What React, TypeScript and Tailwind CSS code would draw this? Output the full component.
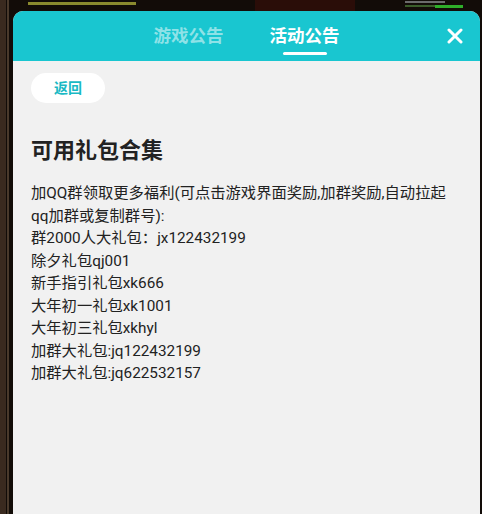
import React from "react";

const lines = [
  "加QQ群领取更多福利(可点击游戏界面奖励,加群奖励,自动拉起qq加群或复制群号):",
  "群2000人大礼包：jx122432199",
  "除夕礼包qj001",
  "新手指引礼包xk666",
  "大年初一礼包xk1001",
  "大年初三礼包xkhyl",
  "加群大礼包:jq122432199",
  "加群大礼包:jq622532157",
];

export default function App() {
  return (
    <div
      className="w-[482px] h-[514px] overflow-hidden bg-[#120c08] flex flex-col"
      style={{ fontFamily: "Roboto, 'Noto Sans CJK SC', sans-serif" }}
    >
      {/* top strip of the game scene behind */}
      <div className="h-[11px] flex shrink-0">
        <div className="w-[6px] bg-[#3a2a1f]" />
        <div className="w-[1px]" />
        <div className="w-[2px] bg-[#4a3a2c]" />
        <div className="w-[19px]" />
        <div className="pt-[2px]">
          <div className="w-[108px] h-[3px] bg-[#8a8a2e]" />
        </div>
        <div className="w-[119px]" />
        <div className="w-[100px] bg-[#2a0d08]" />
        <div className="w-[50px]" />
        <div className="flex flex-col gap-[2px] pt-[1px]">
          <div className="w-[40px] h-[2px] bg-[#6b6b6b]" />
          <div className="flex">
            <div className="w-[30px] h-[2px] bg-[#3a5d2a]" />
            <div className="w-[28px] h-[3px] bg-[#2fae2a]" />
          </div>
        </div>
      </div>

      <div className="flex flex-1">
        <div className="w-[13px] flex shrink-0">
          <div className="w-[6px] bg-[#3a2a1f]" />
          <div className="w-[1px]" />
          <div className="w-[2px] bg-[#4a3a2c]" />
        </div>

        <div className="w-[467px] rounded-t-[10px] overflow-hidden bg-[#f1f1f1] flex flex-col">
          {/* header */}
          <div className="h-[50px] bg-[#19c6d0] grid grid-cols-[1fr_auto_1fr] items-start pt-[14px] shrink-0">
            <div />
            <div className="flex gap-[46px]">
              <div className="flex flex-col items-center">
                <span className="text-[17.5px] leading-[22px] font-bold text-[#8fe2e7]">游戏公告</span>
              </div>
              <div className="flex flex-col items-center">
                <span className="text-[17.5px] leading-[22px] font-bold text-white">活动公告</span>
                <div className="mt-[5px] w-[44px] h-[3px] rounded-full bg-white" />
              </div>
            </div>
            <div className="flex justify-end pr-[17px] pt-[3px]">
              <svg viewBox="0 0 16 16" width="16" height="16">
                <path d="M2 2 L14 14 M14 2 L2 14" stroke="white" strokeWidth="3" strokeLinecap="round" />
              </svg>
            </div>
          </div>

          {/* body */}
          <div className="pl-[18px] pr-[28px] pt-[12px]">
            <button className="w-[74px] h-[30px] rounded-full bg-white flex items-center justify-center text-[14px] font-bold text-[#19b9c4]">
              返回
            </button>
            <h1 className="mt-[33px] text-[22px] leading-[30px] font-bold text-[#222]">可用礼包合集</h1>
            <div className="mt-[16px] text-[15.3px] leading-[22.5px] text-[#222]">
              {lines.map((l, i) => (
                <div key={i}>{l}</div>
              ))}
            </div>
          </div>
        </div>
      </div>
    </div>
  );
}
